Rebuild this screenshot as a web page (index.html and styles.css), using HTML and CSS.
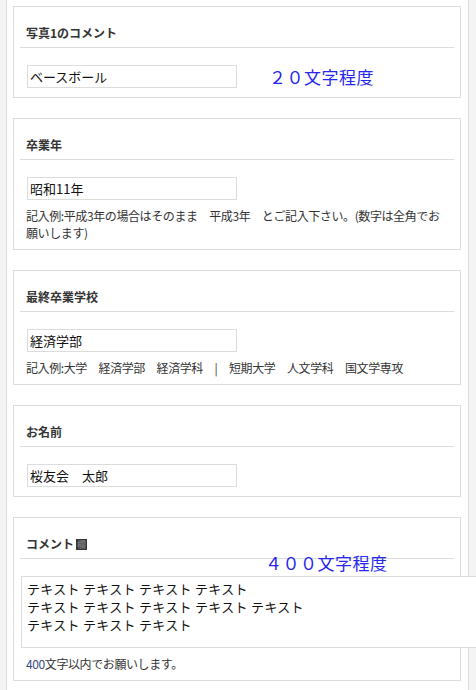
FILE: index.html
```html
<!DOCTYPE html>
<html lang="ja">
<head>
<meta charset="utf-8">
<title>フォーム</title>
<link rel="stylesheet" href="styles.css">
</head>
<body>
<div class="page">
  <section class="card">
    <h2 class="card-title">写真1のコメント</h2>
    <div class="card-body">
      <div class="field-row">
        <input class="text-input" type="text" value="ベースボール">
        <span class="hint-blue">２０文字程度</span>
      </div>
    </div>
  </section>

  <section class="card">
    <h2 class="card-title">卒業年</h2>
    <div class="card-body">
      <input class="text-input" type="text" value="昭和11年">
      <p class="help">記入例:平成3年の場合はそのまま　平成3年　とご記入下さい。(数字は全角でお願いします)</p>
    </div>
  </section>

  <section class="card">
    <h2 class="card-title">最終卒業学校</h2>
    <div class="card-body">
      <input class="text-input" type="text" value="経済学部">
      <p class="help">記入例:大学　経済学部　経済学科　|　短期大学　人文学科　国文学専攻</p>
    </div>
  </section>

  <section class="card">
    <h2 class="card-title">お名前</h2>
    <div class="card-body">
      <input class="text-input" type="text" value="桜友会　太郎">
    </div>
  </section>

  <section class="card">
    <h2 class="card-title">コメント<span class="mark">欄</span></h2>
    <div class="card-body comment-body">
      <span class="hint-blue hint-over">４００文字程度</span>
      <textarea class="text-area">テキスト テキスト テキスト テキスト
テキスト テキスト テキスト テキスト テキスト
テキスト テキスト テキスト</textarea>
      <p class="help"><span class="num">400</span>文字以内でお願いします。</p>
    </div>
  </section>
</div>
</body>
</html>
```

FILE: styles.css
```css
html, body {
  margin: 0;
  padding: 0;
  overflow-x: hidden;
}

body {
  background: #f4f4f4;
  font-family: "Noto Sans CJK JP", "Noto Sans", sans-serif;
  color: #222;
}

.page {
  box-sizing: border-box;
  width: 463px;
  min-height: 100vh;
  margin-left: 6px;
  padding-top: 6px;
  background: #fff;
  border-left: 1px solid #dcdcdc;
  border-right: 1px solid #dcdcdc;
}

.card {
  margin: 0 7px 20px 6px;
  border: 1px solid #dcdcdc;
  background: #fff;
}

.card-title {
  margin: 0 6px;
  padding: 18px 6px 6px;
  border-bottom: 1px solid #dcdcdc;
  font-size: 12px;
  line-height: 16px;
  font-weight: bold;
  color: #333;
}

.mark {
  display: inline-block;
  margin-left: 2px;
  width: 11px;
  height: 11px;
  background: #333;
  color: #777;
  font-size: 9px;
  line-height: 11px;
  text-align: center;
  vertical-align: -1px;
  overflow: hidden;
}

.card-body {
  padding: 17px 12px 9px 12px;
}

.field-row {
  display: flex;
  align-items: center;
  gap: 32px;
}

.text-input {
  display: block;
  box-sizing: border-box;
  width: 210px;
  height: 23px;
  margin: 0 0 0 1px;
  padding: 0 2px;
  border: 1px solid #dcdcdc;
  background: #fff;
  font-family: "Noto Sans CJK JP", "Noto Sans", sans-serif;
  font-size: 13px;
  color: #111;
  outline: none;
}

.hint-blue {
  font-size: 17px;
  line-height: 17px;
  color: #2626ee;
  letter-spacing: 0.5px;
}

.help {
  margin: 7px 0 -1px;
  font-size: 12px;
  line-height: 17px;
  color: #333;
  letter-spacing: -0.4px;
}

.num {
  color: #3a4a80;
}

.comment-body {
  position: relative;
}

.hint-over {
  position: absolute;
  left: 251px;
  top: -5px;
}

.text-area {
  display: block;
  box-sizing: border-box;
  width: 470px;
  height: 72px;
  margin-left: -5px;
  padding: 3px 5px;
  border: 1px solid #dcdcdc;
  background: #fff;
  font-family: "Noto Sans CJK JP", "Noto Sans", sans-serif;
  font-size: 13px;
  line-height: 18px;
  letter-spacing: 0.3px;
  color: #111;
  resize: none;
  overflow: hidden;
  outline: none;
}
```
